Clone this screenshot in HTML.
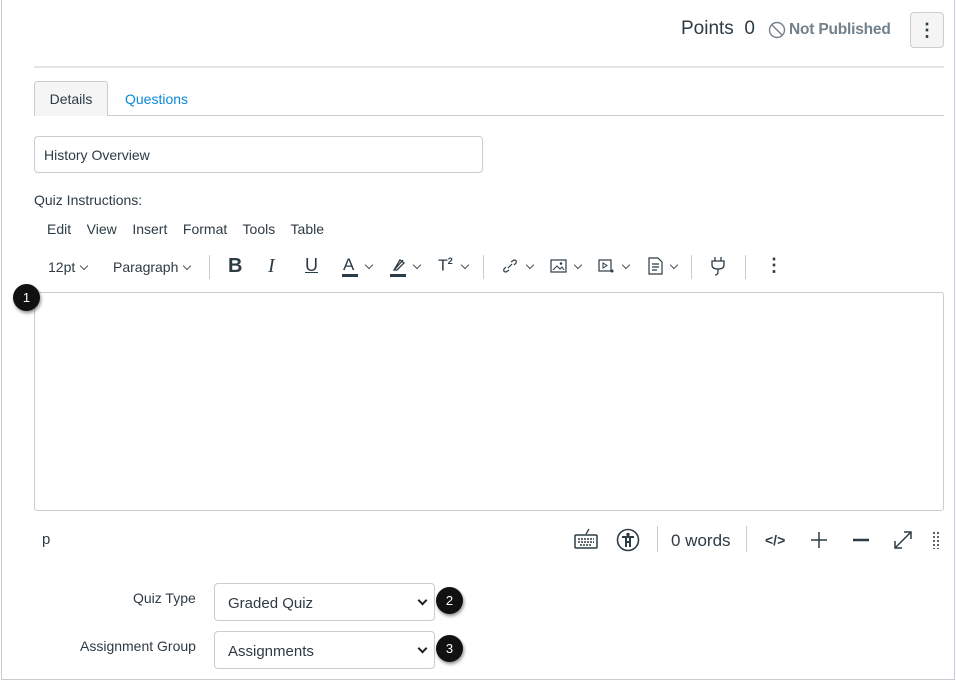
<!DOCTYPE html>
<html><head><meta charset="utf-8"><style>
*{box-sizing:border-box;margin:0;padding:0}
body{width:956px;height:682px;background:#fff;font-family:"Liberation Sans",sans-serif;color:#2d3b45;position:relative;overflow:hidden}
.a{position:absolute;white-space:nowrap}
.frame{position:absolute;left:1px;top:-2px;width:954px;height:682px;border:1px solid #c7cdd1;border-top:none}
.badge{position:absolute;width:27px;height:27px;border-radius:50%;background:#111;color:#fff;font-size:13px;text-align:center;line-height:27px;box-shadow:1px 2px 3px rgba(0,0,0,.45)}
.sel{position:absolute;left:214px;width:221px;height:38px;border:1px solid #c7cdd1;border-radius:4px;font-size:15px;padding:11px 13px;color:#2d3b45}
.sel:after{content:"";position:absolute;right:8px;top:13px;width:5px;height:5px;border-right:2px solid #222;border-bottom:2px solid #222;transform:rotate(45deg)}
.tb{font-size:14px;color:#2d3b45}
.sep{position:absolute;width:1px;background:#c7cdd1}
.chev{display:inline-block;width:6px;height:6px;border-right:1px solid #555;border-bottom:1px solid #555;transform:rotate(45deg);margin-left:6px;position:relative;top:-3px}
.ch{position:absolute;width:6px;height:6px;border-right:1px solid #555;border-bottom:1px solid #555;transform:rotate(45deg);top:262px}
</style></head><body>
<div class="frame"></div>
<div class="a" style="left:681px;top:18px;font-size:19px;color:#2d3b45">Points&nbsp; 0</div>
<svg class="a" style="left:768px;top:21px" width="18" height="18" viewBox="0 0 18 18"><circle cx="9" cy="9" r="7.5" fill="none" stroke="#73818c" stroke-width="1.4"/><line x1="4" y1="4" x2="14" y2="14" stroke="#73818c" stroke-width="1.4"/></svg>
<div class="a" style="left:789px;top:21px;font-size:15.5px;font-weight:bold;color:#73818c;letter-spacing:-0.2px">Not Published</div>
<div class="a" style="left:910px;top:12px;width:34px;height:36px;background:#f5f5f5;border:1px solid #c7cdd1;border-radius:4px;text-align:center;font-size:18px;line-height:34px;font-weight:bold">⋮</div>
<div class="a" style="left:34px;top:66px;width:910px;height:2px;background:#e3e6e8"></div>
<div class="a" style="left:34px;top:115px;width:910px;height:1px;background:#c7cdd1"></div>
<div class="a" style="left:34px;top:81px;width:74px;height:35px;background:#f5f5f5;border:1px solid #c7cdd1;border-bottom:none;border-radius:3px 3px 0 0;font-size:14px;text-align:center;line-height:35px">Details</div>
<div class="a" style="left:125px;top:91px;font-size:14px;color:#0b87da">Questions</div>
<div class="a" style="left:34px;top:136px;width:449px;height:37px;border:1px solid #c7cdd1;border-radius:4px;font-size:14px;padding:10px 9px">History Overview</div>
<div class="a" style="left:34px;top:192px;font-size:14px">Quiz Instructions:</div>
<div class="a tb" style="left:47px;top:221px">Edit&nbsp;&nbsp;&nbsp; View&nbsp;&nbsp;&nbsp; Insert&nbsp;&nbsp;&nbsp; Format&nbsp;&nbsp;&nbsp; Tools&nbsp;&nbsp;&nbsp; Table</div>
<div class="a tb" style="left:48px;top:259px">12pt<span class="chev"></span></div>
<div class="a tb" style="left:113px;top:259px">Paragraph<span class="chev"></span></div>
<div class="sep" style="left:209px;top:255px;height:24px"></div>
<div class="a" style="left:228px;top:255px;font-size:20px;font-weight:bold">B</div>
<div class="a" style="left:268px;top:255px;font-size:20px;font-style:italic;font-family:'Liberation Serif',serif">I</div>
<div class="a" style="left:305px;top:255px;font-size:18px;text-decoration:underline">U</div>
<div class="a" style="left:343px;top:255px;font-size:17px">A</div><div class="a" style="left:342px;top:274px;width:16px;height:3px;background:#2d3b45"></div><span class="ch" style="left:366px"></span>
<svg class="a" style="left:391px;top:257px" width="16" height="16" viewBox="0 0 16 16"><path d="M4 12 L12 3 M9 3 L13 6 L6 13 L3 13 Z" fill="none" stroke="#2d3b45" stroke-width="1.3"/></svg><div class="a" style="left:390px;top:274px;width:16px;height:3px;background:#2d3b45"></div><span class="ch" style="left:414px"></span>
<div class="a" style="left:438px;top:256px;font-size:16px">T<sup style="font-size:9px;font-weight:bold">2</sup></div><span class="ch" style="left:462px"></span>
<div class="sep" style="left:483px;top:255px;height:24px"></div>
<svg class="a" style="left:502px;top:258px" width="16" height="16" viewBox="0 0 16 16"><path d="M6 10 L10 6 M4 9 L2 11 Q1 14 4 14 L7 12 M12 7 L14 5 Q15 2 12 2 L9 4" fill="none" stroke="#2d3b45" stroke-width="1.2"/></svg><span class="ch" style="left:527px"></span>
<svg class="a" style="left:550px;top:258px" width="17" height="16" viewBox="0 0 17 16"><rect x="1" y="2" width="15" height="12" fill="none" stroke="#2d3b45" stroke-width="1.2"/><path d="M3 12 L7 8 L10 11 L12 9 L14 12" fill="none" stroke="#2d3b45"/><circle cx="11" cy="5.5" r="1.3" fill="#2d3b45"/></svg><span class="ch" style="left:575px"></span>
<svg class="a" style="left:598px;top:258px" width="18" height="16" viewBox="0 0 18 16"><rect x="1" y="2" width="12" height="11" fill="none" stroke="#2d3b45" stroke-width="1.2"/><path d="M5 5 L9 7.5 L5 10 Z" fill="none" stroke="#2d3b45"/><circle cx="14" cy="13" r="1.5" fill="#2d3b45"/></svg><span class="ch" style="left:623px"></span>
<svg class="a" style="left:648px;top:257px" width="15" height="18" viewBox="0 0 15 18"><path d="M1 1 H10 L14 5 V17 H1 Z M4 7 H11 M4 10 H11 M4 13 H9" fill="none" stroke="#2d3b45" stroke-width="1.2"/></svg><span class="ch" style="left:671px"></span>
<div class="sep" style="left:691px;top:255px;height:24px"></div>
<svg class="a" style="left:709px;top:256px" width="18" height="20" viewBox="0 0 18 20"><path d="M6 1 V5 M12 1 V5 M3 5 H15 V9 Q15 13 9 13 Q3 13 3 9 Z M9 13 V16 Q9 19 6 19" fill="none" stroke="#2d3b45" stroke-width="1.3"/></svg>
<div class="sep" style="left:745px;top:255px;height:24px"></div>
<div class="a" style="left:765px;top:255px;font-size:18px;font-weight:bold">⋮</div>
<div class="a" style="left:34px;top:292px;width:910px;height:219px;border:1px solid #c7cdd1;border-radius:3px"></div>
<div class="badge" style="left:13px;top:284px">1</div>
<div class="a" style="left:42px;top:531px;font-size:15px">p</div>
<svg class="a" style="left:574px;top:528px" width="24" height="22" viewBox="0 0 24 22"><path d="M12 6 L15 1" stroke="#2d3b45" stroke-width="1.3"/><rect x="1" y="7" width="22" height="13" rx="1" fill="none" stroke="#2d3b45" stroke-width="1.5"/><path d="M4 11 H20 M4 14 H20 M6 17 H18" stroke="#2d3b45" stroke-width="1.5" stroke-dasharray="2 1"/></svg>
<svg class="a" style="left:616px;top:528px" width="24" height="24" viewBox="0 0 24 24"><circle cx="12" cy="12" r="10.5" fill="none" stroke="#2d3b45" stroke-width="1.6"/><circle cx="12" cy="6.5" r="1.7" fill="#2d3b45"/><path d="M6 9 H18 M10 9 V19 M14 9 V19 M10 14 H14" stroke="#2d3b45" stroke-width="2"/></svg>
<div class="sep" style="left:657px;top:526px;height:26px"></div>
<div class="a" style="left:671px;top:531px;font-size:17px">0 words</div>
<div class="sep" style="left:746px;top:526px;height:26px"></div>
<div class="a" style="left:765px;top:532px;font-size:14px;font-weight:bold">&lt;/&gt;</div>
<svg class="a" style="left:810px;top:531px" width="18" height="18"><path d="M9 1 V17 M1 9 H17" stroke="#2d3b45" stroke-width="1.5"/></svg>
<svg class="a" style="left:852px;top:531px" width="18" height="18"><path d="M1 9 H17" stroke="#2d3b45" stroke-width="2.5"/></svg>
<svg class="a" style="left:893px;top:530px" width="20" height="20"><path d="M2 18 L18 2 M11 2 H18 V9 M2 11 V18 H9" fill="none" stroke="#2d3b45" stroke-width="1.5"/></svg>
<div class="a" style="left:932px;top:531px;width:8px;height:18px;background-image:radial-gradient(circle,#555 1px,transparent 1.2px);background-size:4px 4px"></div>
<div class="a" style="left:133px;top:590px;font-size:14px">Quiz Type</div>
<div class="sel" style="top:583px">Graded Quiz</div>
<div class="badge" style="left:436px;top:587px">2</div>
<div class="a" style="left:80px;top:638px;font-size:14px">Assignment Group</div>
<div class="sel" style="top:631px">Assignments</div>
<div class="badge" style="left:436px;top:635px">3</div>
</body></html>
